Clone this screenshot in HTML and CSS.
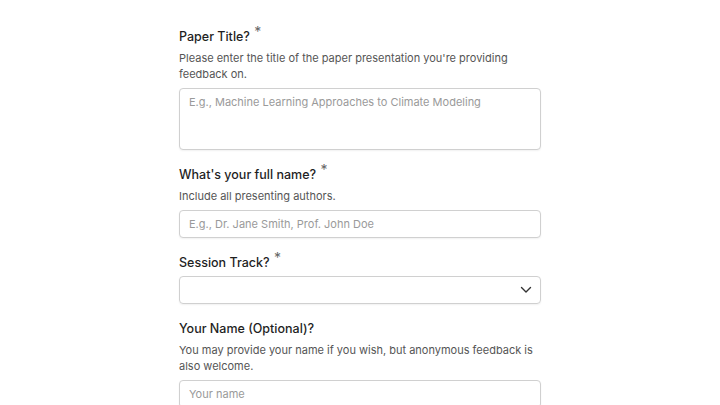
FILE: index.html
```html
<!DOCTYPE html>
<html lang="en">
<head>
<meta charset="utf-8">
<title>Paper Feedback</title>
<link rel="stylesheet" href="styles.css">
</head>
<body>
<form class="form">
  <div class="field">
    <label class="label">Paper Title? <sup class="req">*</sup></label>
    <p class="desc">Please enter the title of the paper presentation you're providing feedback on.</p>
    <textarea class="control textarea" placeholder="E.g., Machine Learning Approaches to Climate Modeling"></textarea>
  </div>
  <div class="field">
    <label class="label">What's your full name? <sup class="req">*</sup></label>
    <p class="desc">Include all presenting authors.</p>
    <input class="control input" type="text" placeholder="E.g., Dr. Jane Smith, Prof. John Doe">
  </div>
  <div class="field">
    <label class="label">Session Track? <sup class="req">*</sup></label>
    <div class="select">
      <span class="select-value"></span>
      <svg class="chev" width="12" height="8" viewBox="0 0 12 8"><path d="M1.5 1.5 L6 6 L10.5 1.5" fill="none" stroke="#333" stroke-width="1.4" stroke-linecap="round" stroke-linejoin="round"/></svg>
    </div>
  </div>
  <div class="field">
    <label class="label">Your Name (Optional)?</label>
    <p class="desc">You may provide your name if you wish, but anonymous feedback is also welcome.</p>
    <input class="control input" type="text" placeholder="Your name">
  </div>
</form>
</body>
</html>
```
FILE: styles.css
```css
html, body {
  margin: 0;
  padding: 0;
  background: #ffffff;
}
body {
  font-family: Inter, "Noto Sans", sans-serif;
  color: #1f1f1f;
}
.form {
  width: 362px;
  margin: 0 auto;
  padding-top: 27px;
  display: flex;
  flex-direction: column;
  gap: 15px;
}
.field {
  display: flex;
  flex-direction: column;
}
.label {
  font-size: 12.5px;
  line-height: 20px;
  font-weight: 500;
  color: #1f1f1f;
  margin-bottom: 3px;
}
.req {
  color: #666;
  font-size: 14px;
  font-weight: 400;
  line-height: 0;
  vertical-align: 0;
  position: relative;
  top: -4px;
  margin-left: 1px;
}
.desc {
  margin: 0 0 6px 0;
  font-size: 11px;
  line-height: 16px;
  color: #555;
}
.control {
  box-sizing: border-box;
  width: 100%;
  border: 1px solid #d0d0d0;
  border-radius: 4px;
  background: #fff;
  font-family: Inter, "Noto Sans", sans-serif;
  font-size: 11px;
  color: #222;
  padding: 0 9px;
  box-shadow: 0 1px 2px rgba(0,0,0,0.06);
  outline: none;
}
.control::placeholder {
  color: #9a9a9a;
}
.textarea {
  height: 62px;
  padding-top: 5px;
  resize: none;
  line-height: 16px;
  display: block;
}
.input {
  height: 28px;
  display: block;
}
.select {
  box-sizing: border-box;
  height: 28px;
  border: 1px solid #d0d0d0;
  border-radius: 4px;
  box-shadow: 0 1px 2px rgba(0,0,0,0.06);
  display: flex;
  align-items: center;
  justify-content: space-between;
  padding: 0 8px 0 10px;
}
.chev {
  display: block;
}
```
